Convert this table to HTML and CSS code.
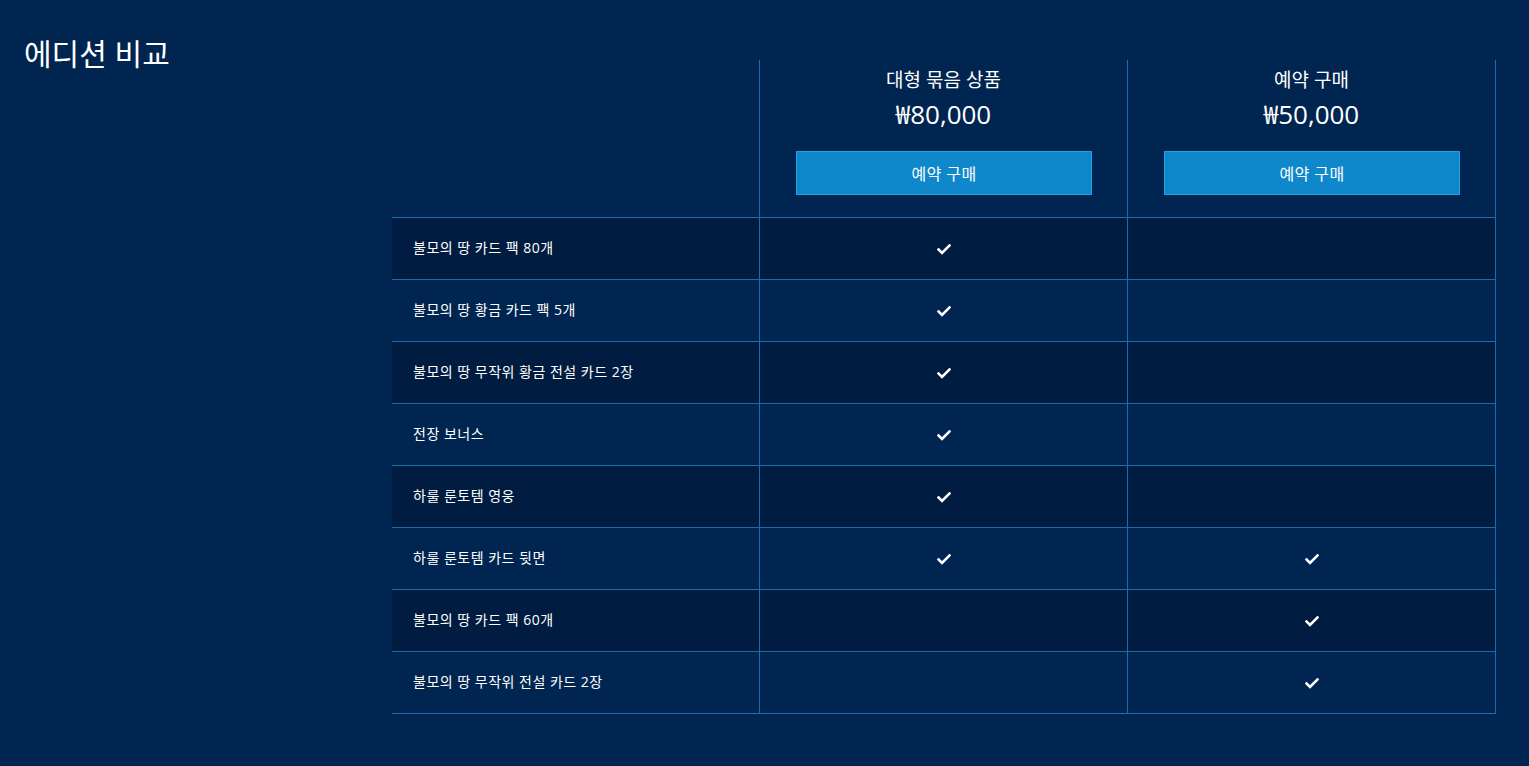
FILE: index.html
```html
<!DOCTYPE html>
<html lang="ko">
<head>
<meta charset="utf-8">
<title>에디션 비교</title>
<link rel="stylesheet" href="styles.css">
</head>
<body>
<div class="page">
  <h1 class="title">에디션 비교</h1>
  <div class="table">
    <div class="head-row">
      <div class="head-cell head-empty"></div>
      <div class="head-cell">
        <div class="ed-name">대형 묶음 상품</div>
        <div class="ed-price">₩80,000</div>
        <button class="buy">예약 구매</button>
      </div>
      <div class="head-cell">
        <div class="ed-name">예약 구매</div>
        <div class="ed-price">₩50,000</div>
        <button class="buy">예약 구매</button>
      </div>
    </div>
    <div class="row dark"><div class="feat">불모의 땅 카드 팩 80개</div><div class="cell"><svg class="chk" viewBox="0 0 14 11"><path d="M1.5 5.5 L5 9 L12.5 1.5"/></svg></div><div class="cell"></div></div>
    <div class="row"><div class="feat">불모의 땅 황금 카드 팩 5개</div><div class="cell"><svg class="chk" viewBox="0 0 14 11"><path d="M1.5 5.5 L5 9 L12.5 1.5"/></svg></div><div class="cell"></div></div>
    <div class="row dark"><div class="feat">불모의 땅 무작위 황금 전설 카드 2장</div><div class="cell"><svg class="chk" viewBox="0 0 14 11"><path d="M1.5 5.5 L5 9 L12.5 1.5"/></svg></div><div class="cell"></div></div>
    <div class="row"><div class="feat">전장 보너스</div><div class="cell"><svg class="chk" viewBox="0 0 14 11"><path d="M1.5 5.5 L5 9 L12.5 1.5"/></svg></div><div class="cell"></div></div>
    <div class="row dark"><div class="feat">하룰 룬토템 영웅</div><div class="cell"><svg class="chk" viewBox="0 0 14 11"><path d="M1.5 5.5 L5 9 L12.5 1.5"/></svg></div><div class="cell"></div></div>
    <div class="row"><div class="feat">하룰 룬토템 카드 뒷면</div><div class="cell"><svg class="chk" viewBox="0 0 14 11"><path d="M1.5 5.5 L5 9 L12.5 1.5"/></svg></div><div class="cell"><svg class="chk" viewBox="0 0 14 11"><path d="M1.5 5.5 L5 9 L12.5 1.5"/></svg></div></div>
    <div class="row dark"><div class="feat">불모의 땅 카드 팩 60개</div><div class="cell"></div><div class="cell"><svg class="chk" viewBox="0 0 14 11"><path d="M1.5 5.5 L5 9 L12.5 1.5"/></svg></div></div>
    <div class="row last"><div class="feat">불모의 땅 무작위 전설 카드 2장</div><div class="cell"></div><div class="cell"><svg class="chk" viewBox="0 0 14 11"><path d="M1.5 5.5 L5 9 L12.5 1.5"/></svg></div></div>
  </div>
</div>
</body>
</html>
```

FILE: styles.css
```css
html, body {
  margin: 0;
  padding: 0;
  background: #002550;
  color: #ffffff;
  font-family: "Open Sans", "Noto Sans CJK KR", sans-serif;
}
.page {
  position: relative;
  height: 766px;
  padding: 0 33px 0 24px;
  box-sizing: border-box;
}
.title {
  position: absolute;
  left: 24px;
  top: 34px;
  margin: 0;
  font-size: 30px;
  font-weight: 400;
  line-height: 40px;
}
.table {
  margin-left: 368px;
  padding-top: 60px;
  width: 1104px;
}
.head-row {
  display: grid;
  grid-template-columns: 368px 368px 368px;
  height: 157px;
}
.head-cell {
  border-right: 1px solid #1a6cad;
  display: flex;
  flex-direction: column;
  align-items: center;
  box-sizing: border-box;
}
.ed-name {
  margin-top: 7px;
  font-size: 19px;
  line-height: 26px;
}
.ed-price {
  margin-top: 4px;
  font-size: 26px;
  line-height: 34px;
}
.buy {
  margin-top: 20px;
  margin-left: 1px;
  width: 296px;
  height: 44px;
  background: #0e88ca;
  border: 1px solid #20a0e0;
  color: #ffffff;
  font-family: inherit;
  font-size: 16px;
  letter-spacing: 0.4px;
  padding: 0;
  cursor: pointer;
}
.row {
  display: grid;
  grid-template-columns: 368px 368px 368px;
  height: 62px;
  border-top: 1px solid #1a6cad;
  box-sizing: border-box;
  background: #002550;
}
.row.dark { background: #001c40; }
.row.last { border-bottom: 1px solid #1a6cad; height: 63px; }
.feat {
  display: flex;
  align-items: center;
  padding-left: 21px;
  padding-bottom: 3px;
  font-size: 14px;
  letter-spacing: 0.5px;
  border-right: 1px solid #1a6cad;
}
.cell {
  display: flex;
  align-items: center;
  justify-content: center;
  padding-top: 1px;
  border-right: 1px solid #1a6cad;
}
.chk {
  width: 14px;
  height: 11px;
  fill: none;
  stroke: #ffffff;
  stroke-width: 2.6;
  stroke-linecap: square;
  stroke-linejoin: miter;
}
```
